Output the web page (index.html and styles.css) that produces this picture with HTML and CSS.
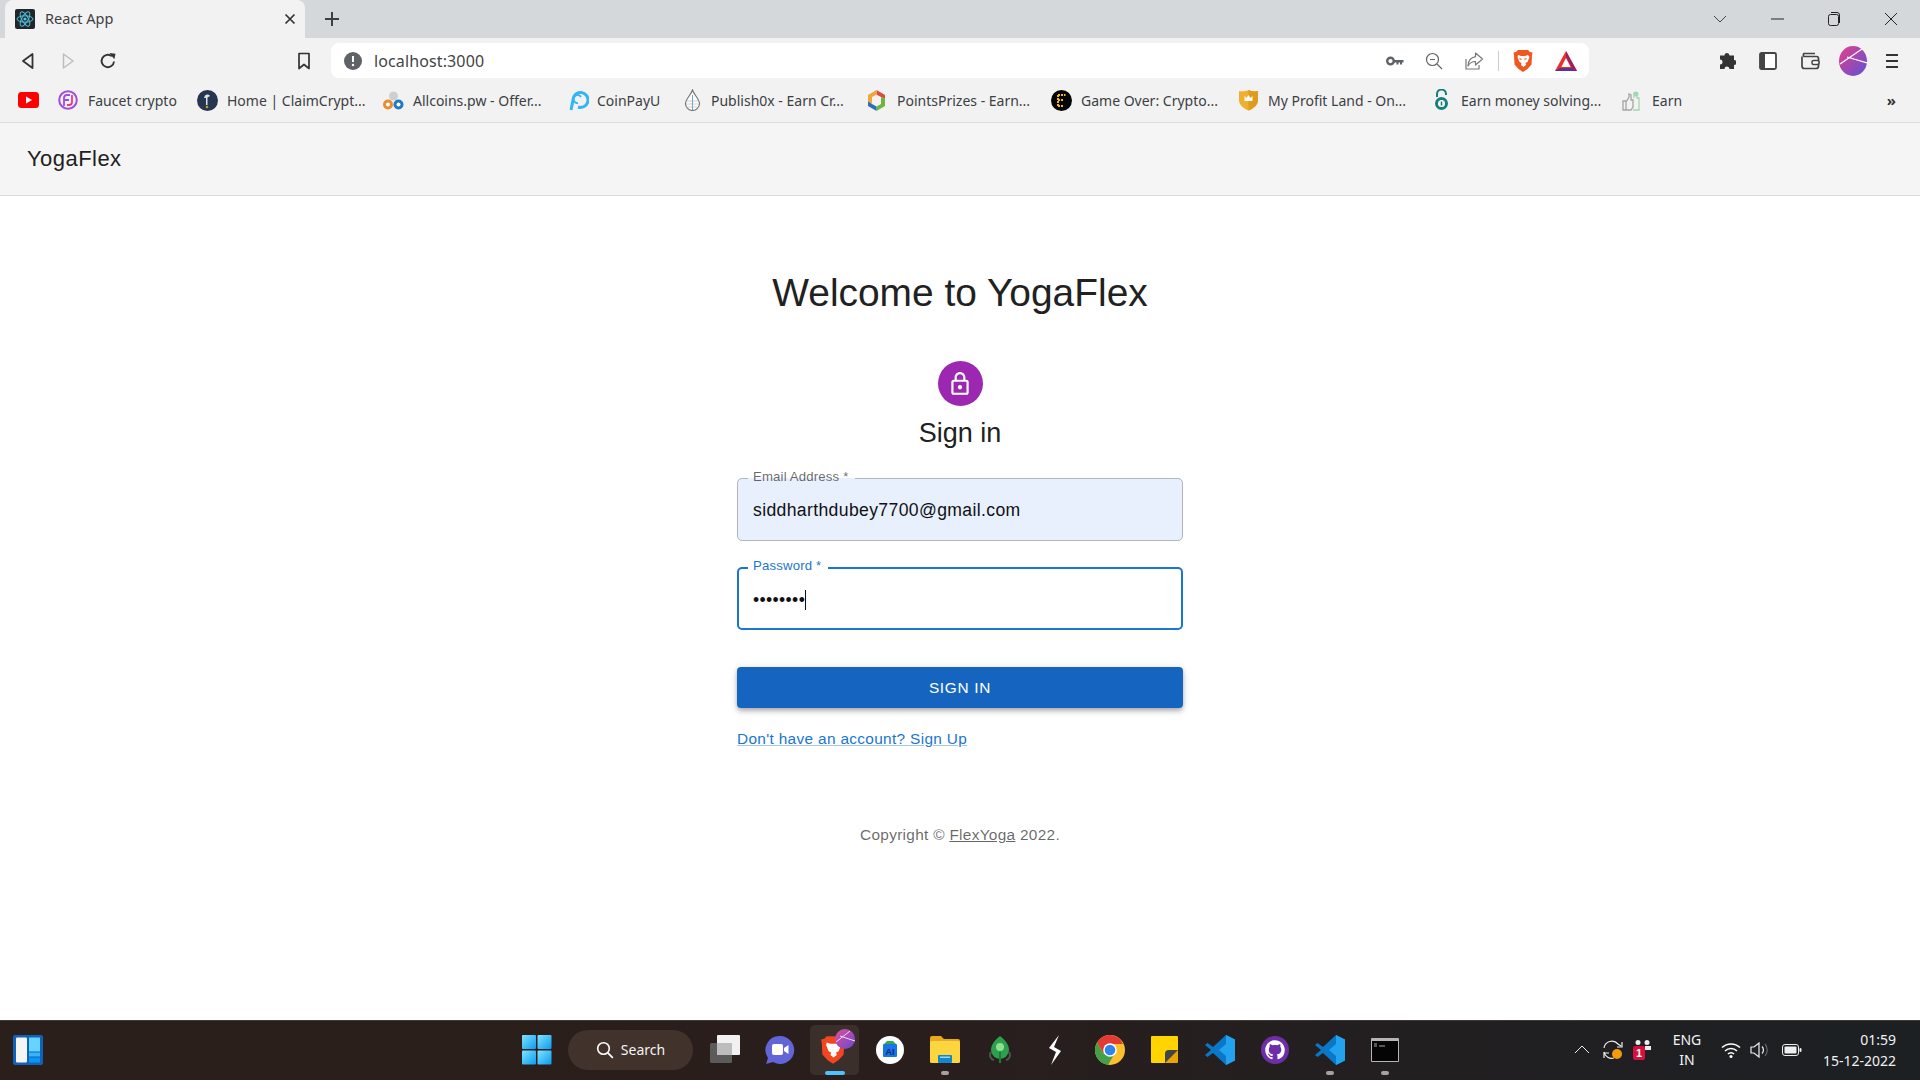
FILE: index.html
```html
<!DOCTYPE html>
<html lang="en">
<head>
    <meta charset="UTF-8">
    <title>React App</title>
    <link rel="stylesheet" href="styles.css">
</head>
<body>
<div class="screen">
    <!-- browser tabs -->
    <div class="tabstrip">
        <div class="tab">
            <svg class="favicon" width="20" height="20" viewBox="0 0 20 20"><rect width="20" height="20" rx="2" fill="#20262c"/><g fill="none" stroke="#4fc3dc" stroke-width="1"><ellipse cx="10" cy="10" rx="8" ry="3.2"/><ellipse cx="10" cy="10" rx="8" ry="3.2" transform="rotate(60 10 10)"/><ellipse cx="10" cy="10" rx="8" ry="3.2" transform="rotate(120 10 10)"/></g><circle cx="10" cy="10" r="1.6" fill="#4fc3dc"/></svg>
            <span class="tab-title">React App</span>
            <svg class="tab-close" width="12" height="12" viewBox="0 0 12 12"><path d="M1.5 1.5l9 9M10.5 1.5l-9 9" stroke="#333" stroke-width="1.7"/></svg>
        </div>
        <svg class="new-tab" width="16" height="16" viewBox="0 0 16 16"><path d="M8 1v14M1 8h14" stroke="#3c4043" stroke-width="2"/></svg>
        <div class="win-controls">
            <svg width="14" height="8" viewBox="0 0 14 8"><path d="M1 1l6 6 6-6" fill="none" stroke="#444" stroke-width="1"/></svg>
            <svg width="14" height="14" viewBox="0 0 14 14"><path d="M1 7h13" stroke="#222" stroke-width="1"/></svg>
            <svg width="14" height="16" viewBox="0 0 14 16"><rect x="1.5" y="3.5" width="10" height="11" rx="2" fill="none" stroke="#222"/><path d="M4 1.5h6a2.5 2.5 0 0 1 2.500 2.500v8" fill="none" stroke="#222"/></svg>
            <svg width="14" height="14" viewBox="0 0 14 14"><path d="M1 1l12 12M13 1L1 13" stroke="#222" stroke-width="1"/></svg>
        </div>
    </div>

    <!-- address bar row -->
    <div class="toolbar">
        <div class="nav-btns">
            <svg width="14" height="18" viewBox="0 0 14 18"><path d="M11.500 2v14L2 9z" fill="none" stroke="#333" stroke-width="1.800" stroke-linejoin="round"/></svg>
            <svg width="14" height="18" viewBox="0 0 14 18"><path d="M2.500 2v14L12 9z" fill="none" stroke="#bdbdbd" stroke-width="1.500" stroke-linejoin="round"/></svg>
            <svg class="reload" width="18" height="18" viewBox="0 0 18 18"><path d="M15 9.500A6.200 6.200 0 1 1 12.800 4.200" fill="none" stroke="#333" stroke-width="1.900"/><path d="M10.500 1l6 .8-1.200 5.400z" fill="#333"/></svg>
        </div>
        <svg class="bookmark" width="14" height="18" viewBox="0 0 14 18"><path d="M2 1.500h10v15l-5-4-5 4z" fill="none" stroke="#333" stroke-width="1.700" stroke-linejoin="round"/></svg>
        <div class="omnibox">
            <svg width="18" height="18" viewBox="0 0 18 18"><circle cx="9" cy="9" r="9" fill="#5f6368"/><path d="M9 4v6" stroke="#fff" stroke-width="2"/><circle cx="9" cy="13" r="1.200" fill="#fff"/></svg>
            <span class="url">localhost:3000</span>
            <div class="omni-actions">
                <svg class="omni-key" width="18" height="10" viewBox="0 0 18 10"><circle cx="4.500" cy="5" r="3.300" fill="none" stroke="#5f6368" stroke-width="2.400"/><path d="M8 4h9.500v2.500h-1.500V8.500h-2V6.500h-1.500V8.500h-2V6.500H8z" fill="#5f6368"/></svg>
                <svg class="omni-zoom" width="18" height="18" viewBox="0 0 18 18"><circle cx="7.500" cy="7.500" r="6" fill="none" stroke="#666" stroke-width="1.200"/><path d="M5 7.500h5M12 12l5 5" stroke="#666" stroke-width="1.200"/></svg>
                <svg class="omni-share" width="20" height="20" viewBox="0 0 20 20"><path d="M2 8v10h13v-4" fill="none" stroke="#777" stroke-width="1.200"/><path d="M11.500 2l7 6-7 6v-3.500C8 10.500 5.500 12 4 15c.2-5 3-8.500 7.500-9.300z" fill="none" stroke="#777" stroke-width="1.200" stroke-linejoin="round"/></svg>
                <span class="omni-sep"></span>
                <svg class="omni-brave" width="20" height="24" viewBox="0 0 20 24"><path d="M5 1h10l2 2 2.500.5-.5 3-.5 9-4 4.500L10 23l-4.500-3-4-4.500-.5-9-.5-3L3 3z" fill="#f1561f"/><path d="M5 6l3 1h4l3-1 1.500 2-2 5-2 1 .5 2-2.500 2-2.500-2 .5-2-2-1-2-5z" fill="#fff"/><path d="M6.500 9.500l2 1M13.500 9.500l-2 1" stroke="#f1561f" stroke-width="1.200"/></svg>
                <svg class="omni-bat" width="22" height="20" viewBox="0 0 22 20"><path d="M11 0l11 20H0z" fill="#e8312a"/><path d="M0 20l5-3h12l5 3z" fill="#662d91"/><path d="M11 0l11 20-5-3-6-11z" fill="#9e1f63"/><path d="M11 7l4.600 9H6.400z" fill="#fff"/></svg>
            </div>
        </div>
        <div class="tool-btns">
            <svg width="18" height="18" viewBox="0 0 18 18"><path d="M6.500 3.500a2.500 2.500 0 0 1 5 0H16V8a2.500 2.500 0 0 1 0 5v4H11.500a2.500 2.500 0 0 0-5 0H2v-4.500a2.500 2.500 0 0 0 0-5V3.500z" fill="#333"/></svg>
            <svg width="18" height="18" viewBox="0 0 18 18"><rect x="1" y="1" width="16" height="16" rx="1.500" fill="#fff" stroke="#444" stroke-width="1.800"/><rect x="1" y="1" width="5" height="16" fill="#444"/></svg>
            <svg width="20" height="18" viewBox="0 0 20 18"><path d="M2 4.500V14a2.500 2.500 0 0 0 2.500 2.500H16a2.500 2.500 0 0 0 2.500-2.500V6.500A2 2 0 0 0 16.500 4.500H4A2 2 0 0 1 4 1.500h11" fill="none" stroke="#444" stroke-width="1.700"/><rect x="12" y="8.500" width="7" height="4" rx="1.500" fill="#fff" stroke="#444" stroke-width="1.500"/></svg>
            <svg class="profile" width="28" height="30" viewBox="0 0 28 30"><defs><linearGradient id="pf" x1="0" y1="0" x2="1" y2="1"><stop offset="0" stop-color="#e83e8c"/><stop offset="1" stop-color="#5b52d6"/></linearGradient></defs><ellipse cx="14" cy="15" rx="14" ry="15" fill="url(#pf)"/><path d="M1 18L23 3M8 11l20 6" stroke="#fff" stroke-width="1.200"/></svg>
            <svg class="menu" width="14" height="16" viewBox="0 0 14 16"><path d="M1 2h12M1 8h12M1 14h12" stroke="#333" stroke-width="1.800"/></svg>
        </div>
    </div>

    <!-- bookmarks -->
    <div class="bookmarks">
        <div class="bm bm-yt">
            <svg width="21" height="16" viewBox="0 0 21 16"><rect width="21" height="16" rx="3.500" fill="#f00"/><path d="M8 4.500l6 3.500-6 3.500z" fill="#fff"/></svg>
        </div>
        <div class="bm bm-faucet">
            <svg width="20" height="22" viewBox="0 0 20 22"><circle cx="10" cy="11" r="8.800" fill="none" stroke="#a24be0" stroke-width="2"/><path d="M6 17V9a3 3 0 0 1 3-3h3M6 11h5" fill="none" stroke="#a24be0" stroke-width="1.800"/><path d="M14 6v7a3 3 0 0 1-3 3H9" fill="none" stroke="#e8388a" stroke-width="1.800"/></svg>
            <span>Faucet crypto</span>
        </div>
        <div class="bm bm-claim">
            <svg width="21" height="21" viewBox="0 0 21 21"><circle cx="10.500" cy="10.500" r="10.500" fill="#27364f"/><path d="M8 5.500c2-1.500 4-1 5 .5l-2.500 1.500V15H9V8H7z" fill="#dde3ea"/><circle cx="10" cy="17" r="1.300" fill="#c9952e"/></svg>
            <span>Home | ClaimCrypt...</span>
        </div>
        <div class="bm bm-allcoins">
            <svg width="21" height="21" viewBox="0 0 21 21"><circle cx="10.500" cy="6" r="4.500" fill="#cfcfcf"/><circle cx="5" cy="14.500" r="5" fill="#e88f2c"/><circle cx="15.500" cy="14.500" r="5" fill="#2379c4"/><circle cx="5" cy="14.500" r="2" fill="#fff"/><circle cx="15.500" cy="14.500" r="2" fill="#fff"/></svg>
            <span>Allcoins.pw - Offer...</span>
        </div>
        <div class="bm bm-coinpay">
            <svg width="22" height="22" viewBox="0 0 22 22"><path d="M4 21l2-10a7.500 7.500 0 1 1 5 7" fill="none" stroke="#33b5f5" stroke-width="3"/><path d="M11 14a4 4 0 1 1 3-6" fill="none" stroke="#33b5f5" stroke-width="1.800"/></svg>
            <span>CoinPayU</span>
        </div>
        <div class="bm bm-publish">
            <svg class="bm-narrow" width="17" height="22" viewBox="0 0 17 22"><path d="M8.500 1C7 6 1.500 10 1.500 14.500a7 7 0 0 0 14 0C15.500 10 10 6 8.500 1z" fill="#fff" stroke="#777" stroke-width="1.200"/><path d="M3 12h11M2.500 15h12M4 18h9" stroke="#bbb" stroke-width=".7"/><path d="M8.500 6v15" stroke="#6aa7d8" stroke-width="1"/></svg>
            <span>Publish0x - Earn Cr...</span>
        </div>
        <div class="bm bm-points">
            <svg width="19" height="21" viewBox="0 0 19 21"><path d="M9.500 0L18 5v4l-4-2-4.500-2.500z" fill="#dd4b39"/><path d="M18 9v7l-8.500 5v-4.500L14 14V7z" fill="#6fb53e"/><path d="M9.500 16.500V21L1 16v-5l4 3z" fill="#2f6db5"/><path d="M1 11V5l8.500-5v4.500L5 7v7z" fill="#f0a63a"/></svg>
            <span>PointsPrizes - Earn...</span>
        </div>
        <div class="bm bm-game">
            <svg width="21" height="21" viewBox="0 0 21 21"><circle cx="10.500" cy="10.500" r="10.500" fill="#050505"/><path d="M7 5h7.500M7 5v11M7 10h6M7 16h6" stroke="#f4b71a" stroke-width="2" stroke-dasharray="2 1"/></svg>
            <span>Game Over: Crypto...</span>
        </div>
        <div class="bm bm-profit">
            <svg width="21" height="22" viewBox="0 0 21 22"><path d="M1 2c3 .8 6 .5 9.500-1C14 2.500 17 2.800 20 2v9c0 5-4.500 8.500-9.500 10.500C5.500 19.500 1 16 1 11z" fill="#eeb02e"/><path d="M10.500 1C14 2.500 17 2.800 20 2v9c0 5-4.500 8.500-9.500 10.500z" fill="#e09a1c"/><path d="M6.500 12V7l2 2 2-3 2 3 2-2v5z" fill="#fff"/></svg>
            <span>My Profit Land - On...</span>
        </div>
        <div class="bm bm-solve">
            <svg class="bm-narrow" width="15" height="22" viewBox="0 0 15 22"><path d="M3 8V5a4.500 4.500 0 0 1 9 0v1" fill="none" stroke="#177e7e" stroke-width="2"/><circle cx="7.500" cy="14.500" r="6.500" fill="#177e7e"/><circle cx="7.500" cy="14.500" r="3.500" fill="#fff"/><path d="M7.500 12.500v4" stroke="#177e7e" stroke-width="1.600"/></svg>
            <span>Earn money solving...</span>
        </div>
        <div class="bm">
            <svg width="20" height="21" viewBox="0 0 20 21"><path d="M1 11h3v9H1zM4 12l3-5V4l2 1v5h2v7l-2 3H4z" fill="none" stroke="#a5a5a5" stroke-width="1.300"/><path d="M11 20h6V8h-2V3h-3v5" fill="none" stroke="#9fd8b2" stroke-width="1.300"/><circle cx="14" cy="4" r="2.500" fill="#9fd8b2"/></svg>
            <span>Earn</span>
        </div>
        <span class="bm-more">&raquo;</span>
    </div>

    <!-- the app itself -->
    <header class="appbar">YogaFlex</header>
    <main class="page">
        <h1 class="welcome">Welcome to YogaFlex</h1>
        <div class="avatar">
            <svg width="26" height="26" viewBox="0 0 24 24"><path fill="#fff" d="M18 8h-1V6c0-2.760-2.240-5-5-5S7 3.240 7 6v2H6c-1.100 0-2 .9-2 2v10c0 1.100.9 2 2 2h12c1.100 0 2-.9 2-2V10c0-1.100-.9-2-2-2zM9 6c0-1.660 1.340-3 3-3s3 1.340 3 3v2H9V6zm9 14H6V10h12v10zm-6-3c1.100 0 2-.9 2-2s-.9-2-2-2-2 .9-2 2 .9 2 2 2z"/></svg>
        </div>
        <h2 class="signin">Sign in</h2>
        <form class="form">
            <fieldset class="field field-filled">
                <legend>Email Address *</legend>
                <div class="value">siddharthdubey7700@gmail.com</div>
            </fieldset>
            <fieldset class="field field-focus">
                <legend>Password *</legend>
                <div class="value">&bull;&bull;&bull;&bull;&bull;&bull;&bull;&bull;<span class="caret"></span></div>
            </fieldset>
            <button class="submit" type="button">SIGN IN</button>
            <a class="signup" href="#">Don't have an account? Sign Up</a>
        </form>
        <p class="copyright">Copyright &copy; <a href="#">FlexYoga</a> 2022.</p>
    </main>

    <!-- windows taskbar -->
    <footer class="taskbar">
        <svg class="widgets" width="30" height="30" viewBox="0 0 30 30"><rect width="30" height="30" rx="2" fill="#0f62b5"/><rect x="3" y="2.500" width="11" height="25" rx="1" fill="#f5f5f5"/><rect x="16" y="2.500" width="11" height="14" fill="#66d4ff"/><rect x="16" y="17.500" width="11" height="4" fill="#38b4fb"/><rect x="16" y="22.500" width="11" height="5" fill="#0a95f5"/></svg>
        <svg class="start" width="30" height="30" viewBox="0 0 30 30"><defs><linearGradient id="win" x1="0" y1="0" x2="1" y2="1"><stop offset="0" stop-color="#7fe3ff"/><stop offset="1" stop-color="#0a9bf0"/></linearGradient></defs><rect width="14" height="14" rx="1" fill="url(#win)"/><rect x="15.500" width="14" height="14" rx="1" fill="url(#win)"/><rect y="15.500" width="14" height="14" rx="1" fill="url(#win)"/><rect x="15.500" y="15.500" width="14" height="14" rx="1" fill="url(#win)"/></svg>
        <div class="search">
            <svg width="18" height="18" viewBox="0 0 18 18"><circle cx="7.500" cy="7.500" r="5.800" fill="none" stroke="#fff" stroke-width="1.600"/><path d="M11.800 11.800l5 5" stroke="#fff" stroke-width="1.800"/></svg>
            <span>Search</span>
        </div>
        <div class="tasks">
            <div class="task">
                <svg width="30" height="30" viewBox="0 0 30 30"><rect y="8" width="22" height="20" rx="1.500" fill="#5b5b5b"/><rect x="7" width="23" height="20" rx="1" fill="#f1f1f1"/><rect x="7" y="8" width="15" height="12" fill="#bdbdbd"/></svg>
            </div>
            <div class="task">
                <svg width="30" height="30" viewBox="0 0 30 30"><path d="M15 1a14 14 0 1 1-7 26L1 29l2-6A14 14 0 0 1 15 1z" fill="#6264d7"/><rect x="7" y="9" width="11" height="11" rx="2" fill="#fff"/><path d="M19 13l4.500-3v9L19 16z" fill="#fff"/></svg>
            </div>
            <div class="task task-active">
                <span class="task-stack"></span>
                <svg class="task-brave" width="26" height="30" viewBox="0 0 20 24"><path d="M5 1h10l2 2 2.500.5-.5 3-.5 9-4 4.500L10 23l-4.500-3-4-4.500-.5-9-.5-3L3 3z" fill="#f1461f"/><path d="M5 6l3 1h4l3-1 1.500 2-2 5-2 1 .5 2-2.500 2-2.500-2 .5-2-2-1-2-5z" fill="#fff"/></svg>
                <svg class="task-badge" width="20" height="20" viewBox="0 0 20 20"><defs><linearGradient id="bd" x1="0" y1="0" x2="1" y2="1"><stop offset="0" stop-color="#e04f9c"/><stop offset="1" stop-color="#6a49d0"/></linearGradient></defs><circle cx="10" cy="10" r="10" fill="url(#bd)"/><path d="M1 13L15 2M5 7l15 5" stroke="#f5d9e8" stroke-width="1"/></svg>
                <i class="pip pip-on"></i>
            </div>
            <div class="task">
                <svg width="28" height="28" viewBox="0 0 28 28"><circle cx="14" cy="14" r="14" fill="#fff"/><rect x="7" y="8" width="14" height="13" rx="1" fill="#1a73e8"/><path d="M8 8l3-3h6l3 3" fill="#34a853"/><text x="14" y="19" font-size="9" font-family="Liberation Sans, sans-serif" font-weight="700" text-anchor="middle" fill="#0b2e66">AI</text></svg>
            </div>
            <div class="task">
                <svg width="30" height="27" viewBox="0 0 30 27"><path d="M0 2a2 2 0 0 1 2-2h9l3 3h14a2 2 0 0 1 2 2v3H0z" fill="#e8a820"/><rect y="5" width="30" height="22" rx="1.500" fill="#fcd53f"/><rect x="8" y="19" width="14" height="8" rx="1" fill="#1488cc"/><rect x="10" y="20.500" width="10" height="1.500" fill="#9ad4f2"/></svg>
                <i class="pip"></i>
            </div>
            <div class="task">
                <svg width="24" height="30" viewBox="0 0 24 30"><path d="M12 1c6 5 9 9 9 14a9 9 0 0 1-18 0C3 10 6 6 12 1z" fill="#2e9e4f"/><circle cx="12" cy="12" r="4" fill="#8ee08e"/><path d="M3 17c-2 3-1 7 3 8M21 17c2 3 1 7-3 8" fill="none" stroke="#4a5a48" stroke-width="2"/><path d="M12 17v11" stroke="#1f7a3a" stroke-width="2"/></svg>
            </div>
            <div class="task">
                <svg width="14" height="30" viewBox="0 0 14 30"><path d="M11 0L1 13l7 4-5 13 10-14-7-4z" fill="#fff"/></svg>
            </div>
            <div class="task">
                <svg width="30" height="30" viewBox="0 0 30 30"><circle cx="15" cy="15" r="15" fill="#fbc02d"/><path d="M15 0A15 15 0 0 0 2 7.500L8.500 18.700 15 9h13a15 15 0 0 0-13-9z" fill="#e53935"/><path d="M2 7.500A15 15 0 0 0 13 29.900L19.500 18.700 8.500 18.700z" fill="#43a047"/><circle cx="15" cy="15" r="6.800" fill="#fff"/><circle cx="15" cy="15" r="5.300" fill="#2e86ec"/></svg>
            </div>
            <div class="task">
                <svg width="27" height="27" viewBox="0 0 27 27"><path d="M1 0h25a1 1 0 0 1 1 1v15L16 27H1a1 1 0 0 1-1-1V1a1 1 0 0 1 1-1z" fill="#ffd400"/><path d="M27 14v12a1 1 0 0 1-1 1H14V18a4 4 0 0 1 4-4z" fill="#e8a400"/><path d="M14 27v-9a4 4 0 0 1 4-4h9z" fill="#444"/></svg>
            </div>
            <div class="task">
                <svg width="30" height="30" viewBox="0 0 30 30"><path d="M21 0l9 4.500v21L21 30 8 18l-5.500 4L0 20l6-5-6-5 2.500-2L8 12z" fill="#0a78c9"/><path d="M21 0l9 4.500v21L21 30V21l-7-6 7-6z" fill="#23a3ee"/></svg>
            </div>
            <div class="task">
                <svg width="28" height="28" viewBox="0 0 16 16"><circle cx="8" cy="8" r="8" fill="#6f2da8"/><g transform="translate(2.400 2.400) scale(.7)"><path fill="#fff" d="M8 0C3.580 0 0 3.580 0 8c0 3.540 2.290 6.530 5.470 7.590.4.070.55-.17.55-.38 0-.19-.01-.82-.01-1.490-2.010.37-2.530-.49-2.690-.94-.09-.23-.48-.94-.82-1.130-.28-.15-.68-.52-.01-.53.63-.01 1.080.58 1.230.82.72 1.210 1.870.87 2.330.66.070-.52.28-.87.51-1.070-1.780-.2-3.640-.89-3.640-3.950 0-.87.31-1.590.82-2.150-.08-.2-.36-1.020.08-2.120 0 0 .67-.21 2.200.82.64-.18 1.320-.27 2-.27.68 0 1.360.09 2 .27 1.530-1.040 2.200-.82 2.200-.82.44 1.100.16 1.920.08 2.120.51.56.82 1.270.82 2.150 0 3.070-1.870 3.750-3.650 3.950.29.25.54.73.54 1.480 0 1.070-.01 1.930-.01 2.200 0 .21.15.46.55.38A8.013 8.013 0 0016 8c0-4.420-3.580-8-8-8z"/></g></svg>
            </div>
            <div class="task">
                <svg width="30" height="30" viewBox="0 0 30 30"><path d="M21 0l9 4.500v21L21 30 8 18l-5.500 4L0 20l6-5-6-5 2.500-2L8 12z" fill="#0a78c9"/><path d="M21 0l9 4.500v21L21 30V21l-7-6 7-6z" fill="#23a3ee"/></svg>
                <i class="pip"></i>
            </div>
            <div class="task">
                <svg width="28" height="24" viewBox="0 0 28 24"><rect width="28" height="24" rx="1" fill="#b5b5b5"/><rect x="1" y="3" width="26" height="20" fill="#050505"/><path d="M3 6h3M3 8h3M8 8h6" stroke="#aaa" stroke-width="1"/></svg>
                <i class="pip"></i>
            </div>
        </div>
        <div class="tray">
            <div class="tray-item tray-caret"><svg width="16" height="9" viewBox="0 0 16 9"><path d="M1 8l7-7 7 7" fill="none" stroke="#eee" stroke-width="1"/></svg></div>
            <div class="tray-item tray-sync"><svg width="22" height="22" viewBox="0 0 22 22"><path d="M2 9a8 8 0 0 1 14-4l3 2M20 13" fill="none" stroke="#eee" stroke-width="1.200"/><path d="M20 3v5h-5" fill="none" stroke="#eee" stroke-width="1.200"/><path d="M2 13a8 8 0 0 0 10 6" fill="none" stroke="#eee" stroke-width="1.200"/><path d="M2 19v-5h5" fill="none" stroke="#eee" stroke-width="1.200"/><circle cx="15" cy="15" r="5" fill="#f59a0c"/></svg></div>
            <div class="tray-item tray-red"><svg width="20" height="20" viewBox="0 0 20 20"><circle cx="5" cy="2.500" r="2.500" fill="#eee"/><circle cx="14" cy="2.500" r="2.500" fill="#eee"/><rect x="12" y="6" width="6" height="4" fill="#eee"/><rect y="6" width="12" height="14" rx="2" fill="#d80f3c"/><text x="6" y="17" font-size="11" font-weight="700" font-family="Liberation Sans, sans-serif" text-anchor="middle" fill="#fff">1</text></svg></div>
            <div class="tray-lang"><span>ENG</span><span>IN</span></div>
            <div class="tray-item"><svg width="20" height="16" viewBox="0 0 20 16"><path d="M1 5.500a13 13 0 0 1 18 0M4 9a8.500 8.500 0 0 1 12 0M7 12a4 4 0 0 1 6 0" fill="none" stroke="#fff" stroke-width="1.500"/><circle cx="10" cy="14.500" r="1.500" fill="#fff"/></svg></div>
            <div class="tray-item"><svg width="20" height="18" viewBox="0 0 20 18"><path d="M1 6h3l5-4v14l-5-4H1z" fill="none" stroke="#eee" stroke-width="1.200"/><path d="M12 5.500a5 5 0 0 1 0 7" fill="none" stroke="#eee" stroke-width="1.200"/><path d="M15 3a9 9 0 0 1 0 12" fill="none" stroke="#666" stroke-width="1.200"/></svg></div>
            <div class="tray-item tray-batt"><svg width="20" height="12" viewBox="0 0 20 12"><rect x=".5" y=".5" width="16" height="11" rx="2.500" fill="none" stroke="#eee"/><rect x="2.500" y="2.500" width="12" height="7" rx="1" fill="#eee"/><rect x="17.500" y="4" width="2" height="4" rx="1" fill="#eee"/></svg></div>
            <div class="clock"><span>01:59</span><span>15-12-2022</span></div>
        </div>
    </footer>
</div>
</body>
</html>
```
FILE: styles.css
```css
* {
    box-sizing: border-box;
}
html, body {
    margin: 0;
    height: 100%;
    overflow: hidden;
}
body {
    font-family: "Liberation Sans", Arial, sans-serif;
    background: #fff;
}
.screen {
    display: flex;
    flex-direction: column;
    height: 1080px;
}
svg {
    display: block;
    flex: none;
}

/* tabs */
.tabstrip {
    display: flex;
    align-items: center;
    height: 38px;
    background: #d5d8db;
    flex: none;
}
.tab {
    display: flex;
    align-items: center;
    width: 300px;
    height: 38px;
    margin-left: 5px;
    padding: 0 9px 0 10px;
    background: #f2f2f2;
    border-radius: 8px 8px 0 0;
}
.tab-title {
    margin: -2px 0 0 10px;
    font: 14.500px "Noto Sans", sans-serif;
    color: #3c4043;
}
.tab-close {
    margin-left: auto;
}
.new-tab {
    margin-left: 19px;
}
.win-controls {
    display: flex;
    align-items: center;
    gap: 43px;
    margin-left: auto;
    padding-right: 22px;
}

/* toolbar */
.toolbar {
    display: flex;
    align-items: flex-end;
    height: 40px;
    background: #f2f2f2;
    flex: none;
}
.nav-btns {
    display: flex;
    align-items: center;
    gap: 26px;
    height: 35px;
    padding-left: 21px;
}
.nav-btns .reload {
    margin-left: -2px;
}
.bookmark {
    margin: 0 20px 8px 180px;
}
.omnibox {
    display: flex;
    align-items: center;
    width: 1258px;
    height: 35px;
    padding-left: 13px;
    background: #fff;
    border-radius: 8px;
}
.url {
    margin-left: 12px;
    font: 16px "Noto Sans", sans-serif;
    letter-spacing: .12px;
    color: #444;
}
.omni-actions {
    display: flex;
    align-items: center;
    margin-left: auto;
    padding-right: 12px;
}
.omni-zoom {
    margin-left: 21px;
}
.omni-share {
    margin-left: 21px;
}
.omni-sep {
    width: 1px;
    height: 20px;
    margin: 0 14px;
    background: #ccc;
}
.omni-bat {
    margin-left: 22px;
}
.tool-btns {
    display: flex;
    align-items: center;
    height: 35px;
    padding-left: 129px;
    gap: 23px;
}
.tool-btns .profile {
    margin-left: -4px;
}
.tool-btns .menu {
    margin-left: -5px;
}

/* bookmarks bar */
.bookmarks {
    display: flex;
    align-items: center;
    height: 45px;
    padding-left: 18px;
    background: #f2f2f2;
    border-bottom: 1px solid #dcdcdc;
    flex: none;
}
.bm {
    display: grid;
    grid-template-columns: 30px auto;
    align-items: center;
    justify-content: start;
    flex: none;
    font: 14px "Noto Sans", sans-serif;
    color: #3c4043;
    white-space: nowrap;
}
.bm-narrow {
    margin-left: 3px;
}
.bm-yt { width: 40px; }
.bm-faucet { width: 139px; }
.bm-claim { width: 186px; }
.bm-allcoins { width: 184px; }
.bm-coinpay { width: 114px; }
.bm-publish { width: 186px; }
.bm-points { width: 184px; }
.bm-game { width: 187px; }
.bm-profit { width: 193px; }
.bm-solve { width: 191px; }
.bm-more {
    margin-left: auto;
    padding-right: 24px;
    font: 700 15px "Noto Sans", sans-serif;
    color: #333;
}

/* app */
.appbar {
    height: 73px;
    padding: 0 27px;
    display: flex;
    align-items: center;
    flex: none;
    font-size: 22px;
    letter-spacing: .45px;
    color: #212121;
    background: #f5f5f5;
    border-bottom: 1px solid #d9d9d9;
}
.page {
    flex: 1;
    display: flex;
    flex-direction: column;
    align-items: center;
}
.welcome {
    margin: 70px 0 0;
    font-size: 38.900px;
    font-weight: 400;
    line-height: 54px;
    color: #212121;
}
.avatar {
    display: flex;
    align-items: center;
    justify-content: center;
    width: 45px;
    height: 45px;
    margin-top: 41px;
    border-radius: 50%;
    background: #9c27b0;
}
.signin {
    margin: 7px 0 0;
    font-size: 27px;
    font-weight: 400;
    line-height: 40px;
    color: #212121;
}
.form {
    display: flex;
    flex-direction: column;
    width: 446px;
    margin-top: 16px;
}
.field {
    margin: 0;
    padding: 0 15px;
    height: 72px;
    min-width: 0;
    border: 1px solid #b1b5bd;
    border-radius: 5px;
    color: rgba(0, 0, 0, .87);
}
.field legend {
    margin-left: -5px;
    padding: 0 7px 4px 5px;
    font-size: 13.200px;
    line-height: 15px;
    letter-spacing: .16px;
    color: rgba(0, 0, 0, .6);
}
.field-filled {
    background: #e8f0fe;
}
.field-focus {
    margin-top: 17px;
    padding: 0 14px;
    border: 2px solid #1976d2;
}
.field-focus legend {
    color: #1976d2;
    margin-left: -5px;
}
.value {
    display: flex;
    align-items: center;
    height: 44px;
    font-size: 17.600px;
    letter-spacing: .36px;
    color: #111;
}
.field-focus .value {
    height: 46px;
}
.caret {
    width: 1px;
    height: 20px;
    background: #111;
}
.submit {
    height: 41px;
    margin-top: 37px;
    border: 0;
    border-radius: 4px;
    font: 15.400px "Liberation Sans", sans-serif;
    letter-spacing: .7px;
    color: #fff;
    background: #1565c0;
    box-shadow: 0 2px 4px -1px rgba(0, 0, 0, .2), 0 4px 5px 0 rgba(0, 0, 0, .14), 0 1px 10px 0 rgba(0, 0, 0, .12);
}
.signup {
    margin-top: 21px;
    font-size: 15.400px;
    line-height: 20px;
    letter-spacing: .33px;
    color: #1976d2;
    text-decoration-color: rgba(25, 118, 210, .4);
}
.copyright {
    margin: 76px 0 0;
    font-size: 15.400px;
    line-height: 20px;
    letter-spacing: .3px;
    color: rgba(0, 0, 0, .6);
}
.copyright a {
    color: inherit;
}

/* taskbar */
.taskbar {
    display: flex;
    align-items: center;
    height: 60px;
    flex: none;
    padding: 0 0 2px 13px;
    border-top: 1px solid #3d3a38;
    background: linear-gradient(90deg, #2b1f1b 0%, #2a1e1c 45%, #231f20 70%, #1c2023 100%);
}
.start {
    margin-left: 479px;
}
.search {
    display: flex;
    align-items: center;
    justify-content: center;
    gap: 7px;
    width: 125px;
    height: 40px;
    margin-left: 16px;
    border-radius: 20px;
    background: #41322c;
    font: 14px "Noto Sans", sans-serif;
    color: #f4f4f4;
}
.tasks {
    display: flex;
    margin-left: 4px;
}
.task {
    position: relative;
    display: flex;
    align-items: center;
    justify-content: center;
    width: 55px;
    height: 50px;
}
.task-active {
    background: #3b2f2b;
    border-radius: 5px;
    margin: 0 3px;
    width: 49px;
}
.task-stack {
    position: absolute;
    top: 0;
    right: -3px;
    width: 6px;
    height: 50px;
    background: #32261f;
    border-radius: 0 5px 5px 0;
    z-index: -1;
}
.task-brave {
    margin-right: 4px;
}
.task-badge {
    position: absolute;
    top: 4px;
    right: 4px;
}
.pip {
    position: absolute;
    bottom: 0;
    left: 50%;
    width: 8px;
    height: 4px;
    margin-left: -4px;
    border-radius: 2px;
    background: #a5a19f;
}
.pip-on {
    width: 20px;
    margin-left: -10px;
    background: #4cc2ff;
}
.tray {
    display: flex;
    align-items: center;
    margin-left: auto;
    padding-right: 24px;
    font: 14px "Noto Sans", sans-serif;
    color: #f2f2f2;
}
.tray-item {
    display: flex;
    justify-content: center;
    width: 29px;
}
.tray-caret {
    width: 31px;
}
.tray-sync {
    width: 31px;
}
.tray-red {
    width: 30px;
}
.tray-lang {
    display: flex;
    flex-direction: column;
    align-items: center;
    width: 58px;
    line-height: 20px;
}
.tray-batt {
    width: 36px;
}
.clock {
    display: flex;
    flex-direction: column;
    align-items: flex-end;
    width: 86px;
    font-size: 14px;
    line-height: 21px;
}
```
